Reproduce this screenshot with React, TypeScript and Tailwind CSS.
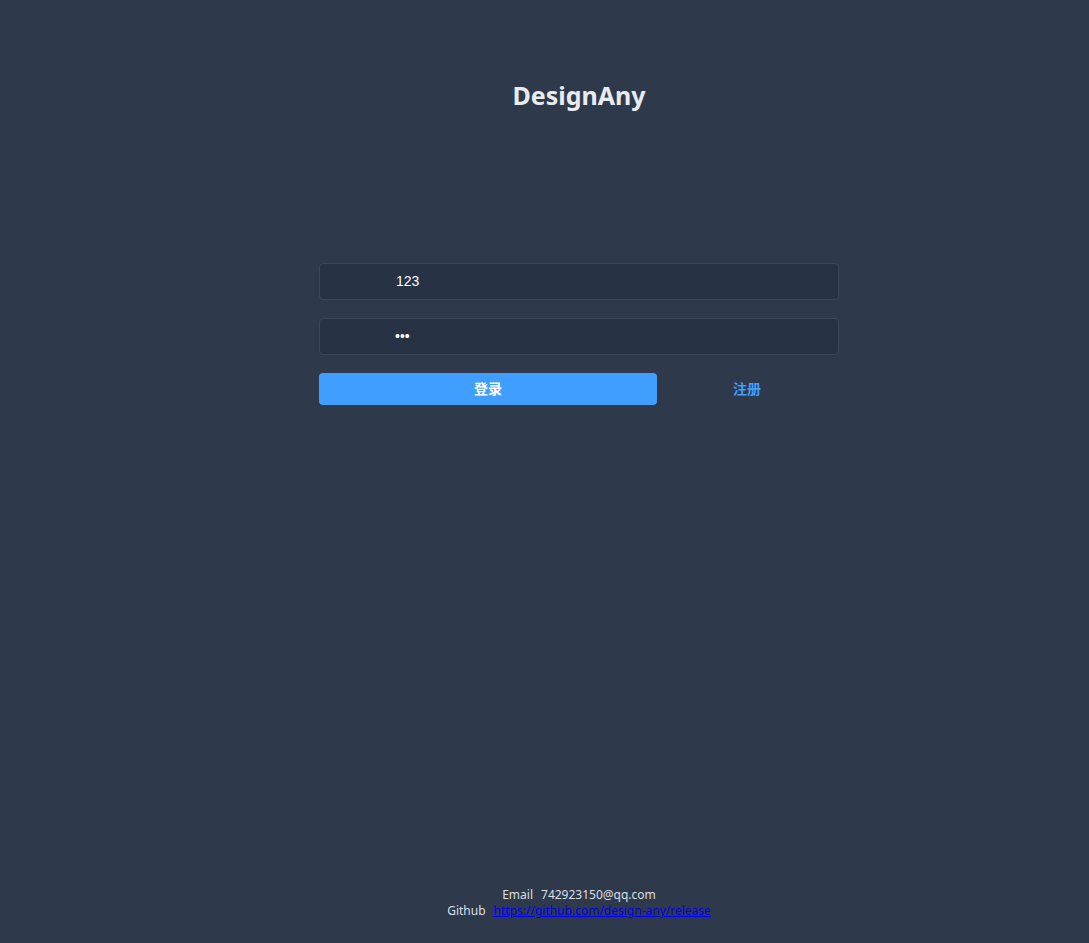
export default function App() {
  return (
    <div
      className="min-h-screen bg-[#2e3a4b] flex flex-col pl-[69px]"
      style={{ fontFamily: '"Noto Sans", "Noto Sans CJK SC", sans-serif' }}
    >
      <div className="flex-1 flex flex-col items-center">
        {/* title */}
        <h1 className="mt-[75px] text-[25px] leading-[40px] font-bold text-[#e8ecf0]">DesignAny</h1>

        {/* login form */}
        <form className="mt-[148px] w-[520px] flex flex-col" onSubmit={e => e.preventDefault()}>
          <div className="h-[37px] rounded border border-[#3b4758] bg-[#273244] flex items-center pl-[76px]">
            <input
              defaultValue="123"
              className="w-full bg-transparent outline-none text-white text-[14px]"
              style={{ fontFamily: '"Liberation Sans", Arial, sans-serif' }}
            />
          </div>
          <div className="mt-[18px] h-[37px] rounded border border-[#3b4758] bg-[#273244] flex items-center pl-[75px]">
            <input
              type="password"
              defaultValue="123"
              className="w-full bg-transparent outline-none text-white text-[14px]"
              style={{ fontFamily: '"Liberation Sans", Arial, sans-serif' }}
            />
          </div>
          <div className="mt-[18px] flex items-center">
            <button
              type="submit"
              className="w-[338px] h-[32px] rounded bg-[#409eff] text-white text-[14px] leading-[30px] font-bold"
            >
              登录
            </button>
            <button type="button" className="flex-1 text-[#409eff] text-[14px] leading-[30px] font-bold pr-[2px]">
              注册
            </button>
          </div>
        </form>
      </div>

      {/* footer */}
      <div className="pb-[24px] flex flex-col items-center text-[12px] leading-[16px] text-[#dcdfe4]">
        <div>
          <span>Email</span>
          <span className="ml-2">742923150@qq.com</span>
        </div>
        <div>
          <span>Github</span>
          <a href="#" className="ml-2 text-[#0000ee] underline">
            https://github.com/design-any/release
          </a>
        </div>
      </div>
    </div>
  );
}
